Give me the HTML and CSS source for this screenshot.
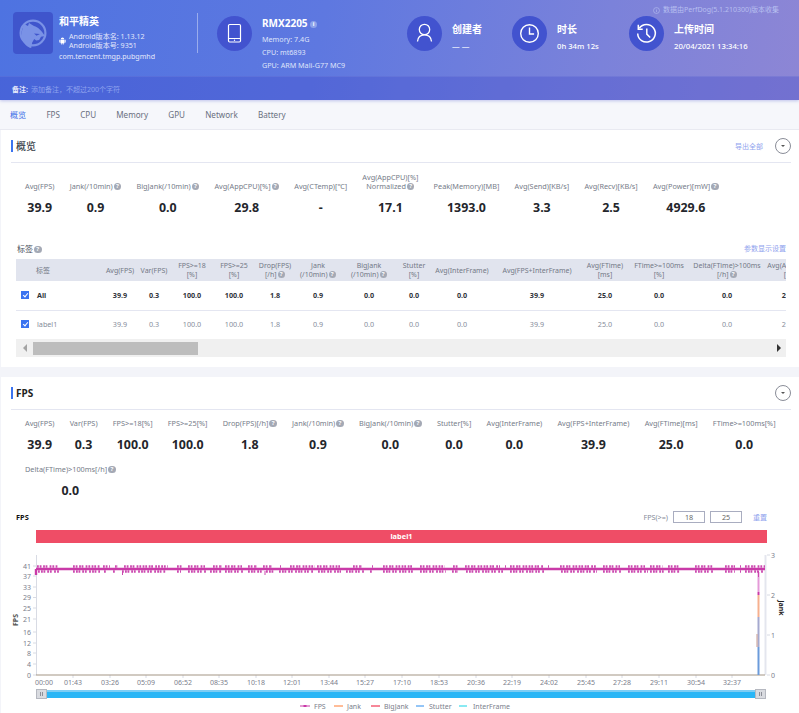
FILE: index.html
```html
<!DOCTYPE html>
<html lang="zh">
<head>
<meta charset="utf-8">
<title>PerfDog</title>
<link rel="stylesheet" href="styles.css">
</head>
<body>
<header class="hero">
  <div class="hero-note"><svg class="hero-note-icon" viewBox="0 0 8 8"><circle cx="4" cy="4" r="3.4"/><path d="M4 3.5v2.4M4 2v.9"/></svg>数据由PerfDog(5.1.210300)版本收集</div>
  <div class="hero-main">
    <div class="app">
      <div class="app-logo">
        <svg viewBox="0 0 40 42" width="40" height="42">
          <circle cx="20" cy="21" r="12.4" fill="none" stroke="#7a92e6" stroke-width="2.2"/>
          <path d="M9 27c-1-5 0-10 2-15l4 2 1-3 5 3c4 1 7 4 11 10l-4 .8-1.8 3.2-3 .5-2-1.500-2 3.500-1 5.500c-4-.5-7-4-9-9z" fill="#7a92e6"/>
          <path d="M21 21.5l6 .5-3.500 1.8z" fill="#3f55cc"/>
        </svg>
      </div>
      <div class="app-text">
        <div class="app-name">和平精英</div>
        <div class="app-ver">
          <svg class="android" viewBox="0 0 8 9"><path d="M2 2.6a2 2 0 0 1 4 0zM.4 3.1h.9v3H.4zM6.7 3.1h.9v3h-.9zM1.7 3.1h4.6v3.9h-1v1.6h-.9V7h-.8v1.6h-.9V7h-1z" fill="#fff"/></svg>
          <div class="app-ver-lines"><div>Android版本名: 1.13.12</div><div>Android版本号: 9351</div></div>
        </div>
        <div class="app-pkg">com.tencent.tmgp.pubgmhd</div>
      </div>
    </div>
    <div class="hero-divider"></div>
    <div class="device">
      <div class="round">
        <svg viewBox="0 0 35 35" width="35" height="35"><rect x="11.5" y="8.5" width="12" height="17.5" rx="1.2" fill="none" stroke="#fff" stroke-width="1.2"/><path d="M11.5 22.5h12" stroke="#fff" stroke-width="1"/><circle cx="17.5" cy="24.2" r=".7" fill="#fff"/></svg>
      </div>
      <div class="device-text">
        <div class="device-name">RMX2205 <span class="info-dot">i</span></div>
        <div class="device-line">Memory: 7.4G</div>
        <div class="device-line">CPU: mt6893</div>
        <div class="device-line">GPU: ARM Mali-G77 MC9</div>
      </div>
    </div>
    <div class="stat stat-creator">
      <div class="round">
        <svg viewBox="0 0 35 35" width="35" height="35" fill="none" stroke="#fff" stroke-width="1.3"><circle cx="17.5" cy="13.5" r="5.2"/><path d="M10.5 25.5c.4-4.4 3-6.6 7-6.6s6.6 2.2 7 6.6"/></svg>
      </div>
      <div><div class="stat-title">创建者</div><div class="stat-value stat-dash">— —</div></div>
    </div>
    <div class="stat stat-time">
      <div class="round">
        <svg viewBox="0 0 35 35" width="35" height="35" fill="none" stroke="#fff" stroke-width="1.4"><circle cx="17.5" cy="17.5" r="8.8"/><path d="M17.5 11.5v6.5h4.6"/></svg>
      </div>
      <div><div class="stat-title">时长</div><div class="stat-value">0h 34m 12s</div></div>
    </div>
    <div class="stat">
      <div class="round">
        <svg viewBox="0 0 35 35" width="35" height="35" fill="none" stroke="#fff" stroke-width="1.5"><path d="M10.3 12.2a8.8 8.8 0 1 1-1.6 5.3"/><path d="M9.3 8.8v4.4h4.4"/><path d="M17.8 12.5v5.6l3.4 3.4"/></svg>
      </div>
      <div><div class="stat-title">上传时间</div><div class="stat-value">20/04/2021 13:34:16</div></div>
    </div>
  </div>
  <div class="hero-remark"><b>备注:</b><span>添加备注，不超过200个字符</span></div>
</header>

<nav class="tabs">
  <span class="tab tab-on">概览</span><span class="tab">FPS</span><span class="tab">CPU</span><span class="tab">Memory</span><span class="tab">GPU</span><span class="tab">Network</span><span class="tab">Battery</span>
</nav>

<section class="panel panel-first">
  <div class="panel-head">
    <h2 class="panel-title">概览</h2>
    <a class="link export">导出全部</a>
    <span class="fold"></span>
  </div>
  <div class="metrics metrics-overview">
    <div class="metric"><div class="m-label">Avg(FPS)</div><div class="m-value">39.9</div></div>
    <div class="metric"><div class="m-label">Jank(/10min)<i class="help">?</i></div><div class="m-value">0.9</div></div>
    <div class="metric"><div class="m-label">BigJank(/10min)<i class="help">?</i></div><div class="m-value">0.0</div></div>
    <div class="metric"><div class="m-label">Avg(AppCPU)[%]<i class="help">?</i></div><div class="m-value">29.8</div></div>
    <div class="metric"><div class="m-label">Avg(CTemp)[℃]</div><div class="m-value">-</div></div>
    <div class="metric"><div class="m-label">Avg(AppCPU)[%]<br>Normalized<i class="help">?</i></div><div class="m-value">17.1</div></div>
    <div class="metric"><div class="m-label">Peak(Memory)[MB]</div><div class="m-value">1393.0</div></div>
    <div class="metric"><div class="m-label">Avg(Send)[KB/s]</div><div class="m-value">3.3</div></div>
    <div class="metric"><div class="m-label">Avg(Recv)[KB/s]</div><div class="m-value">2.5</div></div>
    <div class="metric"><div class="m-label">Avg(Power)[mW]<i class="help">?</i></div><div class="m-value">4929.6</div></div>
  </div>
  <div class="tag-head"><span class="tag-title">标签<i class="help">?</i></span><a class="link">参数显示设置</a></div>
  <div class="table-wrap">
    <table class="grid">
      <colgroup>
        <col class="c87"><col class="c34"><col class="c34"><col class="c42"><col class="c42"><col class="c40"><col class="c46"><col class="c56"><col class="c34"><col class="c62"><col class="c88"><col class="c48"><col class="c60"><col class="c76"><col class="c48">
      </colgroup>
      <thead>
        <tr>
          <th class="first">标签</th><th>Avg(FPS)</th><th>Var(FPS)</th><th>FPS&gt;=18<br>[%]</th><th>FPS&gt;=25<br>[%]</th><th>Drop(FPS)<br>[/h]<i class="help">?</i></th><th>Jank<br>(/10min)<i class="help">?</i></th><th>BigJank<br>(/10min)<i class="help">?</i></th><th>Stutter<br>[%]</th><th>Avg(InterFrame)</th><th>Avg(FPS+InterFrame)</th><th>Avg(FTime)<br>[ms]</th><th>FTime&gt;=100ms<br>[%]</th><th>Delta(FTime)&gt;100ms<br>[/h]<i class="help">?</i></th><th>Avg(AppCPU)<br>[%]</th>
        </tr>
      </thead>
      <tbody>
        <tr class="row-all">
          <td class="first"><span class="check"></span>All</td><td>39.9</td><td>0.3</td><td>100.0</td><td>100.0</td><td>1.8</td><td>0.9</td><td>0.0</td><td>0.0</td><td>0.0</td><td>39.9</td><td>25.0</td><td>0.0</td><td>0.0</td><td>29.8</td>
        </tr>
        <tr class="row-label">
          <td class="first"><span class="check"></span>label1</td><td>39.9</td><td>0.3</td><td>100.0</td><td>100.0</td><td>1.8</td><td>0.9</td><td>0.0</td><td>0.0</td><td>0.0</td><td>39.9</td><td>25.0</td><td>0.0</td><td>0.0</td><td>29.8</td>
        </tr>
      </tbody>
    </table>
  </div>
  <div class="hscroll">
    <span class="arrow-left"></span>
    <span class="thumb"></span>
    <span class="arrow-right"></span>
  </div>
</section>

<section class="panel">
  <div class="panel-head">
    <h2 class="panel-title panel-title-en">FPS</h2>
    <span class="fold"></span>
  </div>
  <div class="metrics metrics-fps">
    <div class="metric"><div class="m-label">Avg(FPS)</div><div class="m-value">39.9</div></div>
    <div class="metric"><div class="m-label">Var(FPS)</div><div class="m-value">0.3</div></div>
    <div class="metric"><div class="m-label">FPS&gt;=18[%]</div><div class="m-value">100.0</div></div>
    <div class="metric"><div class="m-label">FPS&gt;=25[%]</div><div class="m-value">100.0</div></div>
    <div class="metric"><div class="m-label">Drop(FPS)[/h]<i class="help">?</i></div><div class="m-value">1.8</div></div>
    <div class="metric"><div class="m-label">Jank(/10min)<i class="help">?</i></div><div class="m-value">0.9</div></div>
    <div class="metric"><div class="m-label">BigJank(/10min)<i class="help">?</i></div><div class="m-value">0.0</div></div>
    <div class="metric"><div class="m-label">Stutter[%]</div><div class="m-value">0.0</div></div>
    <div class="metric"><div class="m-label">Avg(InterFrame)</div><div class="m-value">0.0</div></div>
    <div class="metric"><div class="m-label">Avg(FPS+InterFrame)</div><div class="m-value">39.9</div></div>
    <div class="metric"><div class="m-label">Avg(FTime)[ms]</div><div class="m-value">25.0</div></div>
    <div class="metric"><div class="m-label">FTime&gt;=100ms[%]</div><div class="m-value">0.0</div></div>
    <div class="metric"><div class="m-label">Delta(FTime)&gt;100ms[/h]<i class="help">?</i></div><div class="m-value">0.0</div></div>
  </div>
  <div class="chart-head">
    <span class="chart-title">FPS</span>
    <span class="chart-fps">FPS(&gt;=)</span>
    <span class="chart-box">18</span>
    <span class="chart-box">25</span>
    <a class="link chart-reset">重置</a>
  </div>
  <div class="chart-label">label1</div>
  <svg class="chart" viewBox="0 546 799 167" width="799" height="167">
    <g class="axis-faint">
      <path d="M36.5 555v120"/>
      <path d="M33 566h3M33 576h3M33 587h3M33 597.5h3M33 608h3M33 619h3M33 632h3M33 643h3M33 653h3M33 664h3M33 675h3"/>
      <path d="M73 675v3M110 675v3M146 675v3M183 675v3M219 675v3M256 675v3M292 675v3M329 675v3M365 675v3M402 675v3M439 675v3M476 675v3M512 675v3M549 675v3M586 675v3M622 675v3M659 675v3M696 675v3M732 675v3"/>
      <path class="axis-right" d="M765.5 555v120"/>
      <path d="M767 555h3M767 595h3M767 635h3M767 675h3"/>
    </g>
    <g class="tick-text tick-end">
      <text x="31" y="568.5">41</text><text x="31" y="578.5">37</text><text x="31" y="589.5">33</text><text x="31" y="600">29</text><text x="31" y="610.5">25</text><text x="31" y="621.5">21</text><text x="31" y="634.5">16</text><text x="31" y="645.5">12</text><text x="31" y="655.5">8</text><text x="31" y="666.5">4</text><text x="31" y="677.5">0</text>
    </g>
    <g class="tick-text">
      <text x="771" y="557.5">3</text><text x="771" y="597.5">2</text><text x="771" y="637.5">1</text><text x="771" y="677.5">0</text>
    </g>
    <text class="tick-text tick-mid axis-name" transform="translate(18 620) rotate(-90)">FPS</text>
    <text class="tick-text tick-mid axis-name axis-jank" transform="translate(779 608) rotate(90)">Jank</text>
    <g class="tick-text tick-mid">
      <text x="44" y="685">00:00</text><text x="73" y="685">01:43</text><text x="110" y="685">03:26</text><text x="146" y="685">05:09</text><text x="183" y="685">06:52</text><text x="219" y="685">08:35</text><text x="256" y="685">10:18</text><text x="292" y="685">12:01</text><text x="329" y="685">13:44</text><text x="365" y="685">15:27</text><text x="402" y="685">17:10</text><text x="439" y="685">18:53</text><text x="476" y="685">20:36</text><text x="512" y="685">22:19</text><text x="549" y="685">24:02</text><text x="586" y="685">25:45</text><text x="622" y="685">27:28</text><text x="659" y="685">29:11</text><text x="696" y="685">30:54</text><text x="732" y="685">32:37</text>
    </g>
    <path class="baseline" d="M36 675h729"/>
    <path class="s-spike-pink" d="M758.5 572v20"/>
    <path class="s-spike-mag" d="M758.5 592v3"/>
    <path class="s-spike-orange" d="M758.5 595v22"/>
    <path class="s-spike-lav" d="M758.5 617v30"/>
    <path class="s-spike-blue" d="M758.5 647v28"/>
    <path class="s-spike-brown" d="M757 634v13"/>
    <path class="s-line" d="M36 569h729M36 569v6"/>
    <path class="s-dots" d="M37 566.5H58M73 566.5H100M103 566.5H110M115 566.5H118M124 566.5H168M177 566.5H182M188 566.5H205M213 566.5H222M225 566.5H242M248 566.5H257M263 566.5H272M280 566.5H281M290 566.5H315M317 566.5H340M353 566.5H362M372 566.5H373M383 566.5H413M420 566.5H445M453 566.5H458M465 566.5H500M505 566.5H506M510 566.5H543M548 566.5H549M560 566.5H597M603 566.5H620M628 566.5H645M650 566.5H663M668 566.5H680M695 566.5H713M725 566.5H735M740 566.5H741M745 566.5H765"/>
    <path class="s-dots s-dots-low" d="M38 571.5H59M73 571.5H100M104 571.5H106M113 571.5H115M122 571.5H166M177 571.5H181M188 571.5H207M210 571.5H222M225 571.5H243M248 571.5H262M266 571.5H274M279 571.5H314M318 571.5H341M346 571.5H365M370 571.5H372M383 571.5H415M420 571.5H446M452 571.5H458M466 571.5H503M510 571.5H544M561 571.5H597M603 571.5H621M628 571.5H648M650 571.5H664M668 571.5H680M695 571.5H713M725 571.5H735M740 571.5H741M745 571.5H764"/>
    <path class="s-dip" d="M122.5 571v4M265 571v4M758.5 571v6"/>
    <rect class="zoom-track" x="36" y="690" width="730" height="8"/>
    <rect class="zoom-shine" x="36" y="690" width="730" height="2"/>
    <g class="zoom-handle">
      <rect x="36.5" y="689.5" width="10" height="9"/><path d="M40.5 692v4M42.5 692v4"/>
      <rect x="755.5" y="689.5" width="10" height="9"/><path d="M759.5 692v4M761.5 692v4"/>
    </g>
    <g class="legend">
      <path class="lg-fps" d="M300 706h10"/><rect class="lg-fps-dot" x="303.5" y="705" width="3" height="2"/>
      <text x="314" y="708.5">FPS</text>
      <path class="lg-jank" d="M334 706h9"/>
      <text x="347" y="708.5">Jank</text>
      <path class="lg-big" d="M371 706h9"/>
      <text x="384" y="708.5">BigJank</text>
      <path class="lg-stutter" d="M416 706h8"/>
      <text x="429" y="708.5">Stutter</text>
      <path class="lg-inter" d="M459 706h8"/>
      <text x="473" y="708.5">InterFrame</text>
    </g>
  </svg>
</section>
</body>
</html>
```
FILE: styles.css
```css
html, body {
  margin: 0;
  padding: 0;
  height: 713px;
  overflow: hidden;
}
body {
  background: #f3f4f9;
  font-family: "Noto Sans", "Noto Sans CJK SC", sans-serif;
  font-size: 8px;
  color: #666c7a;
}
.hero {
  position: relative;
  height: 100px;
  background: linear-gradient(100deg, #4e73e1 0%, #5e78e0 40%, #7b82da 75%, #8d86d5 100%);
  color: #fff;
  box-shadow: 0 1px 3px rgba(90, 100, 210, .35);
}
.hero-note {
  position: absolute;
  left: 653px;
  top: 4px;
  display: flex;
  align-items: center;
  gap: 3px;
  font-size: 7px;
  line-height: 12px;
  color: #b7bff0;
  white-space: nowrap;
}
.hero-note-icon {
  width: 7px;
  height: 7px;
  fill: none;
  stroke: #b7bff0;
  stroke-width: .7;
}
.hero-main {
  display: flex;
  align-items: flex-start;
  height: 76px;
  box-sizing: border-box;
  padding: 12px 0 0 13px;
}
.app { display: flex; width: 184px; }
.app-logo {
  width: 40px;
  height: 42px;
  background: #3f55cc;
  border-radius: 4px;
  flex: none;
}
.app-text { margin-left: 6px; }
.app-name {
  font-size: 10px;
  font-weight: 700;
  line-height: 18px;
}
.app-ver {
  display: flex;
  align-items: center;
  gap: 3px;
  margin-top: 2px;
}
.android { width: 7px; height: 8px; flex: none; }
.app-ver-lines {
  font-size: 7.1px;
  line-height: 9px;
  color: #e4e8fb;
  white-space: nowrap;
}
.app-pkg {
  font-size: 7.1px;
  line-height: 11px;
  margin-top: 1px;
  color: #e4e8fb;
  white-space: nowrap;
}
.hero-divider {
  width: 1px;
  height: 40px;
  margin-top: 1px;
  background: rgba(255, 255, 255, .4);
  flex: none;
}
.round {
  width: 35px;
  height: 35px;
  border-radius: 50%;
  background: #4253cf;
  flex: none;
  margin-top: 4px;
}
.device {
  display: flex;
  gap: 10px;
  margin-left: 19px;
  width: 190px;
}
.device-text { margin-top: 4px; }
.device-name {
  font-size: 10px;
  font-weight: 700;
  line-height: 14px;
}
.info-dot {
  display: inline-block;
  width: 7px;
  height: 7px;
  line-height: 7px;
  border-radius: 50%;
  background: #8ea3ea;
  text-align: center;
  font-size: 5.5px;
  vertical-align: 1px;
}
.device-line {
  font-size: 7.2px;
  line-height: 13px;
  color: #dfe4fa;
  white-space: nowrap;
}
.device-name + .device-line { margin-top: 3px; }
.stat {
  display: flex;
  gap: 10px;
  white-space: nowrap;
}
.stat-creator { width: 105px; }
.stat-time { width: 117px; }
.stat-title {
  font-size: 10px;
  font-weight: 700;
  line-height: 14px;
  margin-top: 10px;
}
.stat-value {
  font-size: 7.7px;
  font-weight: 500;
  line-height: 12px;
  margin-top: 4px;
}
.stat-dash { font-weight: 700; color: #dfe4fa; }
.hero-remark {
  height: 24px;
  box-sizing: border-box;
  padding-left: 12px;
  display: flex;
  align-items: center;
  gap: 3px;
  font-size: 7px;
  color: #8ea2ee;
  background: rgba(56, 66, 200, .3);
  border-top: 1px solid rgba(255, 255, 255, .07);
}
.hero-remark b { color: #e6eafb; font-weight: 700; }
.tabs {
  height: 29px;
  display: flex;
  align-items: center;
  gap: 20.2px;
  padding-left: 10px;
  font-size: 8.1px;
  color: #6a7080;
  border-bottom: 1px solid #e9eaf1;
  background: #f6f7fb;
}
.tab-on { color: #3d6fe8; }
.panel {
  background: #fff;
  margin-left: 1px;
  padding-bottom: 10px;
}
.panel-first { height: 227px; margin-bottom: 10px; }
.panel-head {
  height: 33px;
  box-sizing: border-box;
  margin: 0 8px 0 10px;
  display: flex;
  align-items: center;
  border-bottom: 1px solid #e4e6f1;
}
.panel-title {
  margin: 0;
  flex: 1;
  font-size: 10px;
  font-weight: 500;
  line-height: 12px;
  padding-left: 3px;
  color: #3a3f4b;
  border-left: 2px solid #3b73f0;
}
.panel-title-en { font-weight: 700; color: #222; }
.link { color: #8fa3ee; font-size: 7px; }
.export { margin-right: 12px; }
.fold {
  position: relative;
  width: 14px;
  height: 14px;
  border: 1px solid #8a8d98;
  border-radius: 50%;
}
.fold::after {
  content: "";
  position: absolute;
  left: 4.5px;
  top: 6px;
  border: 2.5px solid transparent;
  border-top: 2.5px solid #555;
  border-bottom: 0;
}
.metrics {
  display: flex;
  flex-wrap: wrap;
  gap: 0 15.2px;
  padding-left: 24px;
  padding-right: 10px;
}
.metrics-overview { padding-top: 8px; height: 68px; align-content: flex-start; }
.metrics-fps { padding-top: 9px; row-gap: 13px; }
.metric {
  text-align: center;
  display: flex;
  flex-direction: column;
  justify-content: flex-end;
  white-space: nowrap;
}
.metrics-overview .metric { height: 44px; }
.m-label {
  font-size: 7.3px;
  line-height: 9px;
  color: #767c89;
}
.m-value {
  font-size: 12.4px;
  font-weight: 700;
  line-height: 15px;
  margin-top: 9px;
  color: #24262c;
}
.help {
  display: inline-block;
  width: 7.5px;
  height: 7.5px;
  margin: .75px 0 0 1px;
  border-radius: 50%;
  background: #a4a9b5;
  color: #fff;
  font-style: normal;
  font-size: 6px;
  line-height: 7.5px;
  text-align: center;
  font-weight: 700;
  vertical-align: top;
}
.tag-head {
  display: flex;
  justify-content: space-between;
  align-items: center;
  height: 14px;
  margin: 2px 13px 4px 16px;
}
.tag-title { font-size: 8px; color: #4a4f5c; }
.tag-title .help { margin-top: 3px; }
.table-wrap {
  margin-left: 15px;
  width: 770px;
  overflow: hidden;
}
.grid {
  border-collapse: collapse;
  table-layout: fixed;
  width: 797px;
}
.c87 { width: 87px; } .c34 { width: 34px; } .c42 { width: 42px; } .c40 { width: 40px; }
.c46 { width: 46px; } .c56 { width: 56px; } .c62 { width: 62px; } .c88 { width: 88px; }
.c48 { width: 48px; } .c60 { width: 60px; } .c76 { width: 76px; }
.grid th {
  height: 22px;
  padding: 0;
  background: #e1e4ee;
  font-size: 7px;
  font-weight: 400;
  line-height: 9px;
  color: #737986;
  text-align: center;
  white-space: nowrap;
}
.grid td {
  height: 28px;
  padding: 0 0 1px;
  font-size: 7.2px;
  text-align: center;
  white-space: nowrap;
}
.grid .first { text-align: left; padding-left: 20px; }
.grid td.first { padding-left: 5px; }
.row-all td { font-weight: 700; color: #30333b; border-bottom: 1px solid #e4e6f1; }
.row-label td { height: 26px; padding-bottom: 2px; color: #868d9b; }
.check {
  display: inline-block;
  position: relative;
  width: 8px;
  height: 8px;
  margin-right: 8px;
  background: #3b73f0;
  vertical-align: -1px;
}
.check::after {
  content: "";
  position: absolute;
  left: 2.6px;
  top: .6px;
  width: 2px;
  height: 4px;
  border: solid #fff;
  border-width: 0 1px 1px 0;
  transform: rotate(40deg);
}
.hscroll {
  display: flex;
  align-items: center;
  margin-left: 15px;
  width: 770px;
  height: 18px;
  background: #f0f0f0;
}
.arrow-left {
  width: 0;
  height: 0;
  margin-left: 7px;
  border: 4px solid transparent;
  border-right: 4px solid #a3a3a3;
  border-left: 0;
}
.thumb {
  width: 165px;
  height: 13px;
  margin-left: 6px;
  background: #bdbdbd;
}
.arrow-right {
  width: 0;
  height: 0;
  margin-left: auto;
  margin-right: 5px;
  border: 4px solid transparent;
  border-left: 4px solid #333;
  border-right: 0;
}
.chart-head {
  display: flex;
  align-items: center;
  height: 14px;
  margin: 12px 32px 0 15px;
}
.chart-title {
  flex: 1;
  font-size: 7.4px;
  font-weight: 700;
  color: #111;
}
.chart-fps { font-size: 7.2px; color: #858b98; margin-right: 5px; }
.chart-box {
  width: 30px;
  height: 10px;
  border: 1px solid #a9adc0;
  text-align: center;
  font-size: 7.2px;
  line-height: 10px;
  color: #666;
  margin-right: 5px;
}
.chart-reset { margin-left: 6px; }
.chart-label {
  margin: 6px 32px 0 35px;
  height: 13px;
  line-height: 13px;
  background: #ef4d66;
  color: #fff;
  font-size: 7.4px;
  font-weight: 700;
  text-align: center;
}
.chart {
  display: block;
  margin-left: -1px;
  margin-top: 3px;
}
.axis-faint path { fill: none; stroke: #d8dbe4; stroke-width: 1; }
.axis-faint .axis-right { stroke: #e4e6ee; stroke-width: 2; }
.tick-text { font-size: 7px; fill: #7b808c; }
.tick-end { text-anchor: end; }
.tick-mid { text-anchor: middle; }
.axis-name { font-weight: 700; fill: #555; }
.axis-jank { fill: #222; }
.baseline { stroke: #a39584; stroke-width: 1; fill: none; }
.s-line { stroke: #c93aa8; stroke-width: 2.4; fill: none; }
.s-dots {
  fill: none;
  stroke: #cc49b0;
  stroke-width: 2.6;
  stroke-dasharray: 1.8 .9 1.8 1.6 1.8 .7 1.8 2.2 1.8 1 1.8 1.4;
}
.s-dots-low { stroke-dasharray: 1.8 1.2 1.8 .7 1.8 1.9 1.8 .9 1.8 2.4; }
.s-dip { stroke: #cb45ae; stroke-width: 1; fill: none; }
.s-spike-pink { stroke: #e49ad8; stroke-width: 2; }
.s-spike-mag { stroke: #c93aa8; stroke-width: 2; }
.s-spike-orange { stroke: #f6b08f; stroke-width: 2; }
.s-spike-lav { stroke: #a5a9cf; stroke-width: 2; }
.s-spike-blue { stroke: #6b9bdb; stroke-width: 2; }
.s-spike-brown { stroke: #c99b8f; stroke-width: 1; }
.zoom-track { fill: #29b6f6; }
.zoom-shine { fill: #7ccdf5; }
.zoom-handle rect { fill: #d9dbe0; stroke: #b5b8c0; stroke-width: 1; }
.zoom-handle path { stroke: #8c8f98; stroke-width: 1; fill: none; }
.legend text { font-size: 7px; fill: #7b808c; }
.legend path { fill: none; stroke-width: 1; }
.lg-fps { stroke: #c93aa8; }
.lg-fps-dot { fill: #c93aa8; }
.lg-jank { stroke: #ff7a30; }
.lg-big { stroke: #ee1133; }
.lg-stutter { stroke: #2b8cee; }
.lg-inter { stroke: #14d4e6; }
```
